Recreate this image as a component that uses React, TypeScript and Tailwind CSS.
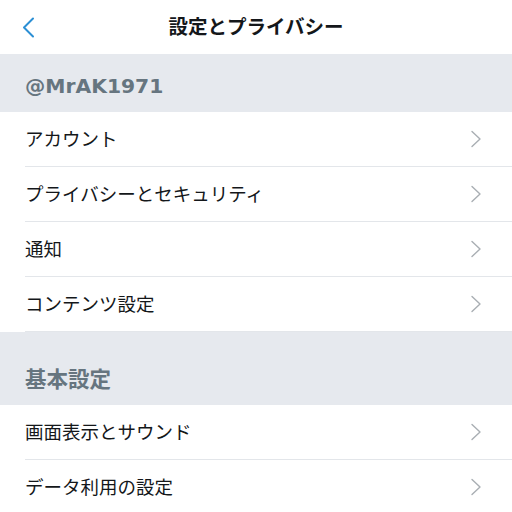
const font = { fontFamily: '"Noto Sans", "Noto Sans CJK JP", sans-serif' };

type Section = {
  title: string;
  tall?: boolean;
  items: string[];
};

const sections: Section[] = [
  { title: "@MrAK1971", items: ["アカウント", "プライバシーとセキュリティ", "通知", "コンテンツ設定"] },
  { title: "基本設定", tall: true, items: ["画面表示とサウンド", "データ利用の設定"] },
];

function Row({ label }: { label: string }) {
  return (
    <div className="pl-[25px] bg-white">
      <div className="h-[55px] flex items-center justify-between pr-[30px] border-b border-[#e3e6ea]">
        <span className="text-[18.5px] text-[#14171a] leading-none">{label}</span>
        <svg width="12" height="18" viewBox="0 0 12 18" fill="none" stroke="#a9aeb3" strokeWidth="1.4" strokeLinecap="round" strokeLinejoin="round">
          <path d="M2 1.5 L10 9 L2 16.5" />
        </svg>
      </div>
    </div>
  );
}

export default function App() {
  return (
    <div className="w-[512px] h-[512px] overflow-hidden bg-white" style={font}>
      {/* header */}
      <header className="h-[54px] relative flex items-center justify-center bg-white">
        <button className="absolute left-[20px] top-[17px] text-[#2b8fd4]" aria-label="戻る">
          <svg width="18" height="21" viewBox="0 0 18 21" fill="none" stroke="currentColor" strokeWidth="2" strokeLinecap="round" strokeLinejoin="round">
            <path d="M13 1.5 L4 10.5 L13 19.5" />
          </svg>
        </button>
        <h1 className="text-[19.5px] font-bold text-[#14171a] leading-none">設定とプライバシー</h1>
      </header>

      {sections.map((s) => (
        <section key={s.title}>
          <div
            className={`bg-[#e6e9ee] px-[25px] flex items-end pb-[16px] ${s.tall ? "h-[73px]" : "h-[58px]"}`}
          >
            {s.tall ? (
              <span className="font-bold text-[#66757f] leading-none text-[21.5px]">{s.title}</span>
            ) : (
              <span className="font-bold text-[#66757f] leading-none text-[20.3px] font-['DejaVu_Sans',sans-serif]">
                {s.title}
              </span>
            )}
          </div>
          {s.items.map((it) => (
            <Row key={it} label={it} />
          ))}
        </section>
      ))}
    </div>
  );
}
